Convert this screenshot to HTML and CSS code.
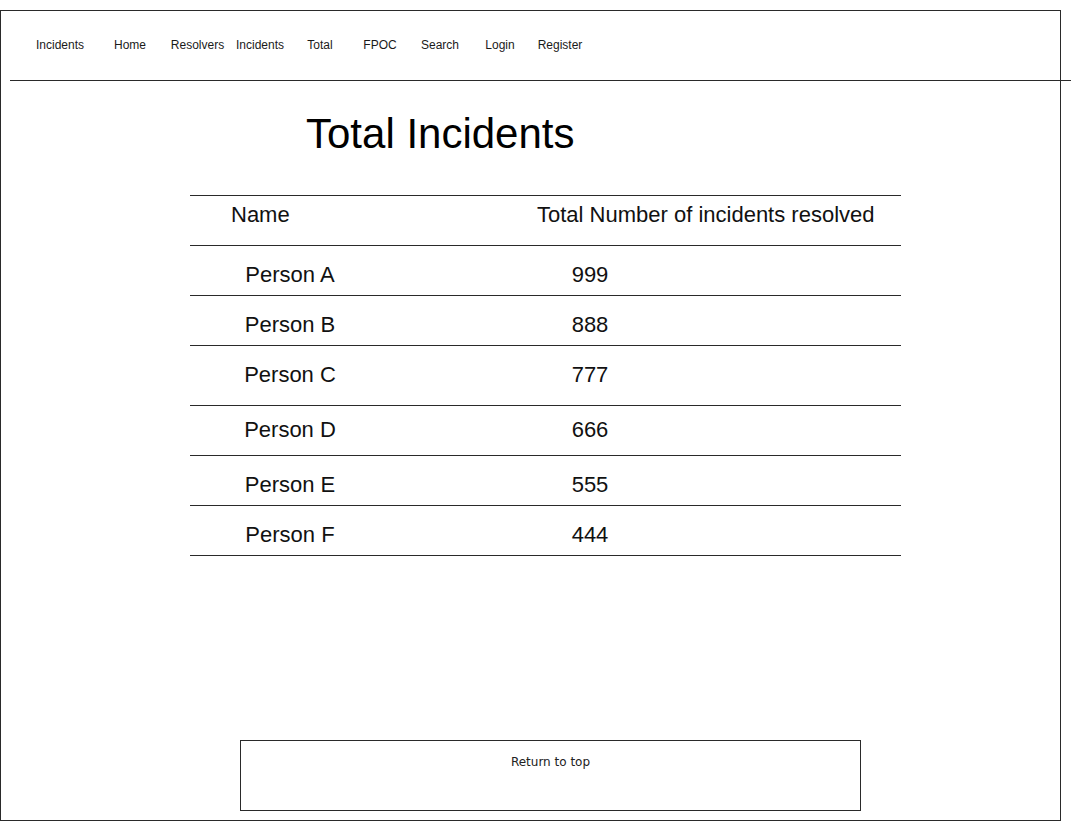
FILE: index.html
```html
<!DOCTYPE html>
<html>
<head>
<meta charset="utf-8">
<title>Total Incidents</title>
<link rel="stylesheet" href="styles.css">
</head>
<body>
<div class="frame">
  <header class="topbar">
    <nav class="nav">
      <a class="nav-item w70">Incidents</a>
      <a class="nav-item w70">Home</a>
      <a class="nav-item w65">Resolvers</a>
      <a class="nav-item">Incidents</a>
      <a class="nav-item">Total</a>
      <a class="nav-item">FPOC</a>
      <a class="nav-item">Search</a>
      <a class="nav-item">Login</a>
      <a class="nav-item">Register</a>
    </nav>
  </header>
  <main class="content">
    <h1 class="title">Total Incidents</h1>
    <div class="table">
      <div class="row head">
        <div class="h-name">Name</div>
        <div class="h-total">Total Number of incidents resolved</div>
      </div>
      <div class="row"><div class="c-name">Person A</div><div class="c-num">999</div></div>
      <div class="row"><div class="c-name">Person B</div><div class="c-num">888</div></div>
      <div class="row tall"><div class="c-name">Person C</div><div class="c-num">777</div></div>
      <div class="row up"><div class="c-name">Person D</div><div class="c-num">666</div></div>
      <div class="row"><div class="c-name">Person E</div><div class="c-num">555</div></div>
      <div class="row"><div class="c-name">Person F</div><div class="c-num">444</div></div>
    </div>
  </main>
  <footer class="footer">
    <a class="to-top">Return to top</a>
  </footer>
</div>
</body>
</html>
```

FILE: styles.css
```css
html, body {
  margin: 0;
  padding: 0;
  background: #fff;
}
body {
  font-family: "Liberation Sans", Arial, sans-serif;
  color: #111;
  overflow: hidden;
}
.frame {
  margin-top: 10px;
  width: 1061px;
  height: 811px;
  box-sizing: border-box;
  border: 1px solid #2a2a2a;
  display: flex;
  flex-direction: column;
}
.topbar {
  margin-left: 9px;
  width: 1062px;
  height: 69px;
  border-bottom: 1px solid #2a2a2a;
  display: flex;
  align-items: center;
  flex-shrink: 0;
}
.nav {
  display: flex;
  padding-left: 15px;
  margin-top: -1px;
}
.nav-item {
  width: 60px;
  text-align: center;
  font-size: 12px;
  line-height: 14px;
  color: #1a1a1a;
}
.nav-item.w70 { width: 70px; }
.nav-item.w65 { width: 65px; }
.content {
  display: flex;
  flex-direction: column;
}
.title {
  margin: 29px 0 0 305px;
  font-size: 42px;
  line-height: 48px;
  font-weight: normal;
  color: #000;
}
.table {
  margin: 37px 0 0 189px;
  width: 711px;
  border-top: 1px solid #2a2a2a;
}
.row {
  display: flex;
  height: 49px;
  box-sizing: content-box;
  border-bottom: 1px solid #2a2a2a;
  font-size: 22px;
  line-height: 24px;
}
.row > div { padding-top: 17px; }
.row.tall { height: 59px; }
.row.up > div { padding-top: 12px; }
.row.head > div { padding-top: 7px; }
.h-name {
  width: 306px;
  padding-left: 41px;
}
.c-name {
  width: 200px;
  text-align: center;
}
.c-num {
  width: 400px;
  text-align: center;
}
.footer {
  margin-top: auto;
  margin-left: 239px;
  margin-bottom: 9px;
  width: 621px;
  height: 71px;
  box-sizing: border-box;
  border: 1px solid #2a2a2a;
  display: flex;
  justify-content: center;
  align-items: flex-start;
}
.to-top {
  margin-top: 14px;
  font-family: "DejaVu Sans", sans-serif;
  font-size: 12px;
  line-height: 14px;
  color: #222;
}
```
